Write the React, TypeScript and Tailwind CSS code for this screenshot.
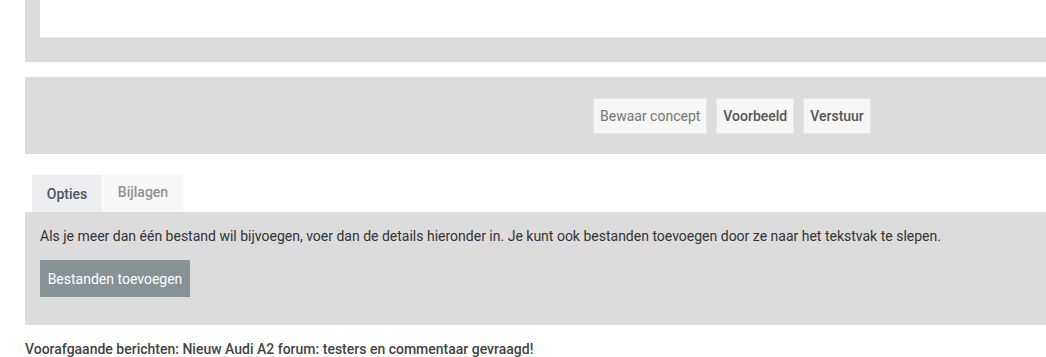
import React from 'react';

const App: React.FC = () => {
  return (
    <div className="w-[1046px] h-[357px] overflow-hidden bg-white font-['Roboto',sans-serif] text-sm">
      <div className="ml-[25px] w-[1100px]">
        {/* Editor area */}
        <div className="bg-[#dcdcdc] h-[62px] pl-[15px]">
          <div className="h-[38px] bg-white border-b border-[#ececec]" />
        </div>

        {/* Submit buttons */}
        <div className="mt-[15px] bg-[#dcdcdc] h-[77px] flex items-center gap-[9px] pl-[568px]">
          <button className="h-[36px] px-[6px] bg-[#f6f6f6] border border-[#e6e6e6] text-[#757575]">
            Bewaar concept
          </button>
          <button className="h-[36px] px-[6px] bg-[#f6f6f6] border border-[#e6e6e6] text-[#555] font-medium">
            Voorbeeld
          </button>
          <button className="h-[36px] px-[6px] bg-[#f6f6f6] border border-[#e6e6e6] text-[#555] font-medium">
            Verstuur
          </button>
        </div>

        {/* Tabs */}
        <div className="mt-[20px] flex items-end pl-[7px] h-[38px]">
          <div className="w-[70px] h-[37px] bg-[#eceeef] text-[#4b5468] font-medium flex items-center justify-center">
            Opties
          </div>
          <div className="ml-px w-[80px] h-[38px] bg-[#f8f8f8] text-[#8c939c] font-medium flex items-center justify-center pb-[2px]">
            Bijlagen
          </div>
        </div>

        {/* Attachments panel */}
        <div className="bg-[#dcdcdc] h-[113px] pt-[14px] pl-[15px]">
          <p className="text-[#333] leading-[20px]">
            Als je meer dan één bestand wil bijvoegen, voer dan de details hieronder in. Je kunt ook bestanden toevoegen door ze naar het tekstvak te slepen.
          </p>
          <button className="mt-[14px] h-[37px] w-[150px] bg-[#879196] text-white">
            Bestanden toevoegen
          </button>
        </div>

        {/* Previous topic */}
        <p className="mt-[14px] text-[#444] font-medium leading-[20px]">
          Voorafgaande berichten: Nieuw Audi A2 forum: testers en commentaar gevraagd!
        </p>
      </div>
    </div>
  );
};

export default App;
